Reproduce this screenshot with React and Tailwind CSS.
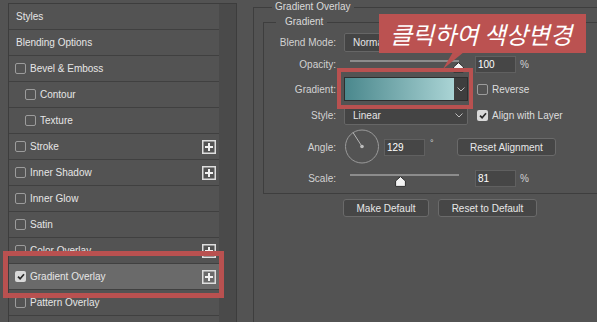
import React from "react";

const ui = "font-['Liberation_Sans',Arial,sans-serif]";

const layers = [
  { name: "Styles", kind: "plain" },
  { name: "Blending Options", kind: "plain" },
  { name: "Bevel & Emboss", kind: "check" },
  { name: "Contour", kind: "check", indent: true },
  { name: "Texture", kind: "check", indent: true },
  { name: "Stroke", kind: "check", plus: true },
  { name: "Inner Shadow", kind: "check", plus: true },
  { name: "Inner Glow", kind: "check" },
  { name: "Satin", kind: "check" },
  { name: "Color Overlay", kind: "check", plus: true },
  { name: "Gradient Overlay", kind: "check", plus: true, checked: true, active: true },
  { name: "Pattern Overlay", kind: "check" },
  { name: "Outer Glow", kind: "check" },
];

function Checkbox({ checked }) {
  if (checked) {
    return (
      <span className="flex h-[11px] w-[11px] shrink-0 items-center justify-center rounded-[2px] bg-[#d9d9d9]">
        <svg width="8" height="7" viewBox="0 0 8 7">
          <path d="M1 3.6 L3.1 5.7 L7 1.2" fill="none" stroke="#2a2a2a" strokeWidth="1.7" />
        </svg>
      </span>
    );
  }
  return <span className="block h-[11px] w-[11px] shrink-0 rounded-[2px] border border-[#9c9c9c]" />;
}

function PlusBox() {
  return (
    <svg width="14" height="14" viewBox="0 0 14 14" className="shrink-0">
      <rect x="0.75" y="0.75" width="12.5" height="12.5" fill="none" stroke="#dedede" strokeWidth="1.5" />
      <path d="M7 3 V11 M3 7 H11" stroke="#f2f2f2" strokeWidth="2" />
    </svg>
  );
}

function Chevron() {
  return (
    <svg width="8" height="5" viewBox="0 0 8 5">
      <path d="M0.5 0.5 L4 4 L7.5 0.5" fill="none" stroke="#bdbdbd" strokeWidth="1" />
    </svg>
  );
}

function LayerList() {
  return (
    <div className="mt-[3px] ml-[8px] flex border-t border-l border-r border-[#3d3d3d]">
      <div className="w-[210px]">
        {layers.map((l) => (
          <div
            key={l.name}
            className={`flex h-[26px] items-center border-b border-[#404040] pr-[3px] ${
              l.active ? "bg-[#6a6a6a]" : ""
            } ${l.kind === "plain" ? "pl-[7px]" : l.indent ? "pl-[16px]" : "pl-[6px]"}`}
          >
            {l.kind === "check" && <Checkbox checked={l.checked} />}
            <span className={`flex-1 text-[#e6e6e6] ${l.kind === "check" ? "ml-[4px]" : ""}`}>
              {l.name}
            </span>
            {l.plus && <PlusBox />}
          </div>
        ))}
      </div>
      <div className="w-[17px] bg-[#4a4a4a]" />
    </div>
  );
}

function Label({ children }) {
  return <span className="w-[73px] pr-[1px] text-right text-[#d2d2d2]">{children}</span>;
}

function NumberBox({ value }) {
  return (
    <div className="flex h-[17px] w-[41px] items-center border border-[#606060] bg-[#464646] pl-[2px] text-white">
      {value}
    </div>
  );
}

function Slider({ thumb }) {
  return (
    <div className="relative h-full w-[124px]">
      <div className="ml-[6px] mt-[6px] h-[2px] w-[109px] bg-[#8c8c8c]" />
      <svg
        width="11"
        height="11"
        viewBox="0 0 11 11"
        className={`absolute top-[8px] ${thumb}`}
      >
        <path d="M5.5 0.6 L10.4 5 L10.4 10.4 L0.6 10.4 L0.6 5 Z" fill="#f4f4f4" stroke="#2e2e2e" strokeWidth="1" />
      </svg>
    </div>
  );
}

function Btn({ w, children }) {
  return (
    <div
      className={`flex h-[18px] ${w} items-center justify-center rounded-[3px] border border-[#6a6a6a] bg-[#464646] text-[#e8e8e8]`}
    >
      {children}
    </div>
  );
}

function GradientPanel() {
  return (
    <fieldset className="mt-[1px] ml-[16px] h-[360px] w-[400px] border border-[#3e3e3e]">
      <legend className="ml-[18px] px-[3px] leading-[12px] text-[#dadada]">Gradient Overlay</legend>
      <fieldset className="mt-[3px] ml-[9px] w-[380px] border border-[#3e3e3e] pb-[5px]">
        <legend className="ml-[12px] pl-[9px] pr-[4px] leading-[12px] text-[#dadada]">Gradient</legend>

        <div className="mt-[4px] flex h-[20px] items-center gap-[7px]">
          <Label>Blend Mode:</Label>
          <div className="flex h-[19px] w-[124px] items-center justify-between rounded-[2px] border border-[#666] bg-[#444] pl-[8px] pr-[4px] text-[#e6e6e6]">
            <span>Normal</span>
            <Chevron />
          </div>
        </div>

        <div className="mt-[2px] flex h-[20px] items-center gap-[7px]">
          <Label>Opacity:</Label>
          <Slider thumb="left-[109px]" />
          <NumberBox value="100" />
          <span className="ml-[-3px] text-[#d2d2d2]">%</span>
        </div>

        <div className="mt-[3px] flex h-[24px] items-center gap-[7px]">
          <Label>Gradient:</Label>
          <div className="flex h-[24px] w-[124px] border border-[#2e2e2e] bg-[#3e3e3e]">
            <div className="flex-1 bg-linear-to-r from-[#4a888d] to-[#aad4d5]" />
            <div className="flex w-[13px] items-center justify-center">
              <Chevron />
            </div>
          </div>
          <span className="ml-[2px] flex">
            <Checkbox />
          </span>
          <span className="ml-[-3px] text-[#dedede]">Reverse</span>
        </div>

        <div className="mt-[4px] flex h-[20px] items-center gap-[7px]">
          <Label>Style:</Label>
          <div className="flex h-[19px] w-[124px] items-center justify-between rounded-[2px] border border-[#666] bg-[#444] pl-[8px] pr-[4px] text-[#e6e6e6]">
            <span>Linear</span>
            <Chevron />
          </div>
          <span className="ml-[2px] flex">
            <Checkbox checked />
          </span>
          <span className="ml-[-3px] text-[#dedede]">Align with Layer</span>
        </div>

        <div className="mt-[5px] flex h-[34px] items-center gap-[7px]">
          <Label>Angle:</Label>
          <div className="flex w-[33px] items-center">
            <svg width="36" height="36" viewBox="0 0 36 36" className="shrink-0">
              <circle cx="18" cy="17.5" r="16.5" fill="none" stroke="#9a9a9a" strokeWidth="1" />
              <path d="M18 17.5 L9 3.5" stroke="#b5b5b5" strokeWidth="1" />
              <circle cx="18" cy="17.5" r="1.8" fill="#bdbdbd" />
            </svg>
          </div>
          <NumberBox value="129" />
          <span className="mb-[6px] ml-[-2px] w-[20px] text-[9px] text-[#d2d2d2]">°</span>
          <Btn w="w-[99px]">Reset Alignment</Btn>
        </div>

        <div className="mt-[4px] flex h-[20px] items-center gap-[7px]">
          <Label>Scale:</Label>
          <Slider thumb="left-[51px]" />
          <NumberBox value="81" />
          <span className="ml-[-3px] text-[#d2d2d2]">%</span>
        </div>
      </fieldset>

      <div className="mt-[5px] ml-[89px] flex gap-[9px]">
        <Btn w="w-[86px]">Make Default</Btn>
        <Btn w="w-[99px]">Reset to Default</Btn>
      </div>
    </fieldset>
  );
}

export default function App() {
  return (
    <div
      className={`relative flex h-[322px] w-[597px] items-start overflow-hidden bg-[#535353] text-[10px] ${ui}`}
    >
      <LayerList />
      <GradientPanel />

      {/* annotations */}
      <div className="absolute left-[3px] top-[251px] h-[47px] w-[221px] border-[5px] border-[#b95150]" />
      <div className="absolute left-[337px] top-[68px] h-[41px] w-[136px] border-4 border-[#b95150]" />
      <svg width="40" height="20" viewBox="0 0 40 20" className="absolute left-[438px] top-[51px]">
        <polygon points="15,1 26,1 5,18" fill="#b95150" />
      </svg>
      <div className="absolute left-[379px] top-[14px] flex h-[39px] w-[207px] items-center bg-[#bb5251] pl-[11px]">
        <span className="font-['Noto_Sans_CJK_KR',sans-serif] text-[24px] italic leading-none text-white">
          클릭하여 색상변경
        </span>
      </div>
    </div>
  );
}
